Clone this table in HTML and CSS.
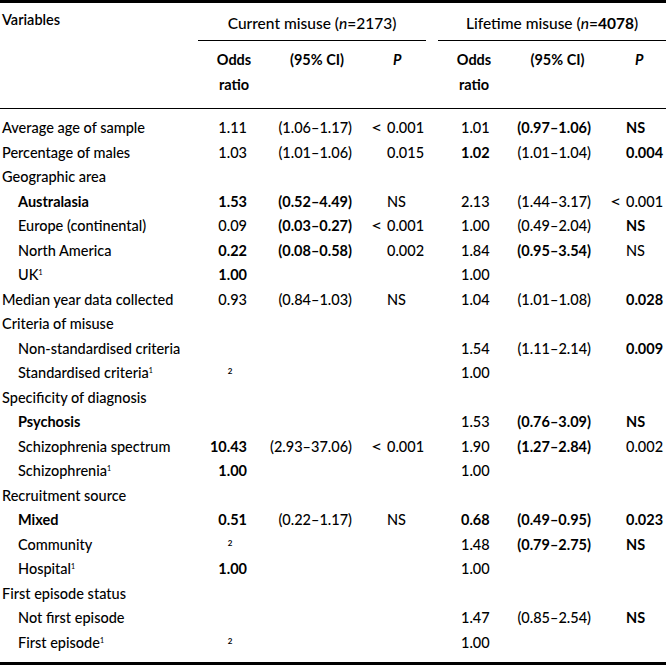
FILE: index.html
```html
<!DOCTYPE html>
<html>
<head>
<meta charset="utf-8">
<link rel="stylesheet" href="styles.css">
</head>
<body>
<div class="frame">
<table class="tbl">
<colgroup>
<col class="w1"><col class="w2"><col class="w3"><col class="w4"><col class="w5"><col class="w6"><col class="w7">
</colgroup>
<thead>
<tr class="h1">
<th class="var">Variables</th>
<th colspan="3" class="span"><div class="spanin cur">Current misuse (<i>n</i>=2173)</div></th>
<th colspan="3" class="span"><div class="spanin life">Lifetime misuse (<i>n</i>=<b>4078</b>)</div></th>
</tr>
<tr class="h2">
<th></th>
<th class="ho1">Odds<br>ratio</th>
<th class="hc1">(95% CI)</th>
<th class="hp1"><i>P</i></th>
<th class="ho2">Odds<br>ratio</th>
<th class="hc2">(95% CI)</th>
<th class="hp2"><i>P</i></th>
</tr>
</thead>
<tbody>
<tr><td class="l">Average age of sample</td><td class="o1">1.11</td><td class="c1">(1.06–1.17)</td><td class="p1"><span class="lt">&lt;</span>0.001</td><td class="o2">1.01</td><td class="c2 b">(0.97–1.06)</td><td class="p2 b">NS</td></tr>
<tr><td class="l">Percentage of males</td><td class="o1">1.03</td><td class="c1">(1.01–1.06)</td><td class="p1">0.015</td><td class="o2 b">1.02</td><td class="c2">(1.01–1.04)</td><td class="p2 b">0.004</td></tr>
<tr><td class="l">Geographic area</td><td></td><td></td><td></td><td></td><td></td><td></td></tr>
<tr><td class="l sub b">Australasia</td><td class="o1 b">1.53</td><td class="c1 b">(0.52–4.49)</td><td class="p1">NS</td><td class="o2">2.13</td><td class="c2">(1.44–3.17)</td><td class="p2"><span class="lt">&lt;</span>0.001</td></tr>
<tr><td class="l sub">Europe (continental)</td><td class="o1">0.09</td><td class="c1 b">(0.03–0.27)</td><td class="p1"><span class="lt">&lt;</span>0.001</td><td class="o2">1.00</td><td class="c2">(0.49–2.04)</td><td class="p2 b">NS</td></tr>
<tr><td class="l sub">North America</td><td class="o1 b">0.22</td><td class="c1 b">(0.08–0.58)</td><td class="p1">0.002</td><td class="o2">1.84</td><td class="c2 b">(0.95–3.54)</td><td class="p2">NS</td></tr>
<tr><td class="l sub">UK<sup>1</sup></td><td class="o1 b">1.00</td><td></td><td></td><td class="o2">1.00</td><td></td><td></td></tr>
<tr><td class="l">Median year data collected</td><td class="o1">0.93</td><td class="c1">(0.84–1.03)</td><td class="p1">NS</td><td class="o2">1.04</td><td class="c2">(1.01–1.08)</td><td class="p2 b">0.028</td></tr>
<tr><td class="l">Criteria of misuse</td><td></td><td></td><td></td><td></td><td></td><td></td></tr>
<tr><td class="l sub">Non-standardised criteria</td><td></td><td></td><td></td><td class="o2">1.54</td><td class="c2">(1.11–2.14)</td><td class="p2 b">0.009</td></tr>
<tr><td class="l sub">Standardised criteria<sup>1</sup></td><td class="o1 mark"><sup>2</sup></td><td></td><td></td><td class="o2">1.00</td><td></td><td></td></tr>
<tr><td class="l">Specificity of diagnosis</td><td></td><td></td><td></td><td></td><td></td><td></td></tr>
<tr><td class="l sub b">Psychosis</td><td></td><td></td><td></td><td class="o2">1.53</td><td class="c2 b">(0.76–3.09)</td><td class="p2 b">NS</td></tr>
<tr><td class="l sub">Schizophrenia spectrum</td><td class="o1 b">10.43</td><td class="c1">(2.93–37.06)</td><td class="p1"><span class="lt">&lt;</span>0.001</td><td class="o2">1.90</td><td class="c2 b">(1.27–2.84)</td><td class="p2">0.002</td></tr>
<tr><td class="l sub">Schizophrenia<sup>1</sup></td><td class="o1 b">1.00</td><td></td><td></td><td class="o2">1.00</td><td></td><td></td></tr>
<tr><td class="l">Recruitment source</td><td></td><td></td><td></td><td></td><td></td><td></td></tr>
<tr><td class="l sub b">Mixed</td><td class="o1 b">0.51</td><td class="c1">(0.22–1.17)</td><td class="p1">NS</td><td class="o2 b">0.68</td><td class="c2 b">(0.49–0.95)</td><td class="p2 b">0.023</td></tr>
<tr><td class="l sub">Community</td><td class="o1 mark"><sup>2</sup></td><td></td><td></td><td class="o2">1.48</td><td class="c2 b">(0.79–2.75)</td><td class="p2 b">NS</td></tr>
<tr><td class="l sub">Hospital<sup>1</sup></td><td class="o1 b">1.00</td><td></td><td></td><td class="o2">1.00</td><td></td><td></td></tr>
<tr><td class="l">First episode status</td><td></td><td></td><td></td><td></td><td></td><td></td></tr>
<tr><td class="l sub">Not first episode</td><td></td><td></td><td></td><td class="o2">1.47</td><td class="c2">(0.85–2.54)</td><td class="p2 b">NS</td></tr>
<tr><td class="l sub">First episode<sup>1</sup></td><td class="o1 mark"><sup>2</sup></td><td></td><td></td><td class="o2">1.00</td><td></td><td></td></tr>
</tbody>
</table>
</div>
</body>
</html>
```
FILE: styles.css
```css
html, body {
  margin: 0;
  padding: 0;
  background: #fff;
}
body {
  font-family: Lato, "Open Sans", sans-serif;
  font-size: 14.5px;
  color: #000;
  font-weight: 500;
}
.frame {
  width: 666px;
  border-top: 3px solid #000;
  border-bottom: 3px solid #000;
}
.tbl {
  width: 666px;
  table-layout: fixed;
  border-collapse: separate;
  border-spacing: 0;
}
.w1 { width: 200px; }
.w2 { width: 60px; }
.w3 { width: 105px; }
.w4 { width: 73px; }
.w5 { width: 72px; }
.w6 { width: 95px; }
.w7 { width: 61px; }
th, td {
  padding: 0;
  white-space: nowrap;
}
th { font-weight: 700; }
.h1 th { vertical-align: top; }
.var {
  text-align: left;
  padding-left: 2px;
  padding-top: 7px;
  line-height: 20px;
  font-weight: 600;
}
.span { font-weight: 500; font-size: 15.5px; }
.spanin {
  border-bottom: 1px solid #000;
  padding-top: 10px;
  padding-bottom: 7px;
  line-height: 20px;
  text-align: center;
}
.spanin.cur { margin-left: -2px; margin-right: 12px; }
.spanin b { font-weight: 700; }
.h2 th {
  border-bottom: 1px solid #000;
  line-height: 25px;
  padding-top: 6px;
  padding-bottom: 11px;
  vertical-align: top;
}
.ho1 { text-align: center; padding-left: 8px; }
.hc1 { text-align: center; padding-left: 9px; }
.hp1 { text-align: left; padding-left: 28px; }
.ho2 { text-align: center; }
.hc2 { text-align: center; }
.hp2 { text-align: left; padding-left: 30px; }
td { line-height: 24.5px; }
tbody tr:first-child td { padding-top: 7px; }
tbody tr:last-child td { padding-bottom: 7px; }
.l { padding-left: 2px; }
.l.sub { padding-left: 18px; }
.o1 { text-align: right; padding-right: 13px; }
.o1.mark { text-align: center; padding-right: 0; }
.c1 { text-align: right; padding-right: 13px; }
.p1 { text-align: left; padding-left: 22px; }
.o2 { text-align: left; padding-left: 23px; }
.c2 { text-align: right; padding-right: 14px; }
.p2 { text-align: left; padding-left: 21px; }
.lt {
  margin-left: -16px;
  display: inline-block;
  width: 16px;
  text-align: left;
  font-size: 14.5px;
  transform: scaleX(1.35);
  transform-origin: left center;
}
.b { font-weight: 700; }
sup {
  font-size: 7px;
  line-height: 0;
  vertical-align: 5px;
}
.mark sup {
  font-size: 8px;
  font-weight: 700;
  vertical-align: 4px;
}
```
